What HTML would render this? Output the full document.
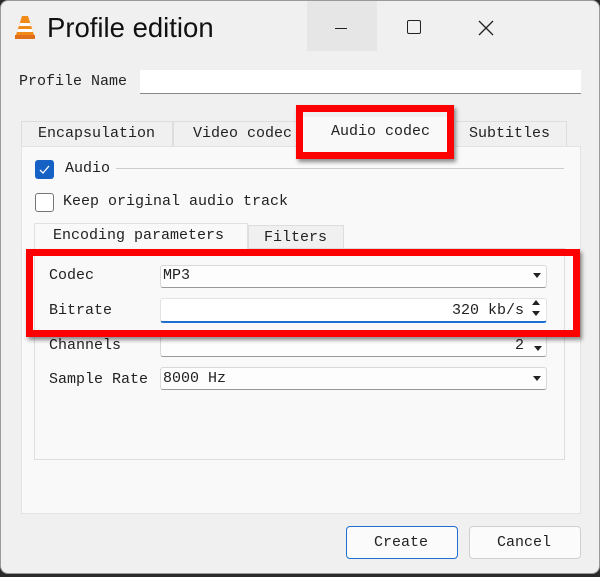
<!DOCTYPE html>
<html><head><meta charset="utf-8"><style>
*{margin:0;padding:0;box-sizing:border-box}
body{width:600px;height:577px;background:#2a2a2a;position:relative;overflow:hidden;font-family:"Liberation Mono","Noto Serif CJK SC",monospace;font-size:15px;color:#222}
.win{position:absolute;left:0;top:0;width:600px;height:574px;background:#f0f0f0;border:1px solid #9a9a9a;border-radius:8px;overflow:hidden}
.a{position:absolute}
.t{position:absolute;white-space:nowrap;line-height:18px}
.tab{position:absolute;background:#f0f0f0;border:1px solid #ddd;border-bottom:none}
.field{position:absolute;background:#fdfdfd;border:1px solid #d8d8d8;border-bottom:1px solid #999;border-radius:3px}
.arrow{position:absolute;width:0;height:0;border-left:4px solid transparent;border-right:4px solid transparent;border-top:5px solid #222}
.red{position:absolute;border:7px solid #f00;box-shadow:2px 3px 4px rgba(0,0,0,.45)}
</style></head><body>
<div class="win">
<div class="a" style="left:306px;top:0;width:70px;height:50px;background:#e6e6e6"></div>
<svg class="a" style="left:13px;top:13px" width="22" height="26" viewBox="0 0 22 26"><path d="M8 2h6l6 19H2z" fill="#f08a18"/><path d="M6 9h10l1 3H5zM4 15h14l1 3H3z" fill="#fff"/><rect x="1" y="21" width="20" height="4" fill="#e0701a"/></svg>
<div class="t" style="left:46px;top:11px;font-family:'Liberation Sans',sans-serif;font-size:27.5px;line-height:31px;color:#111">Profile edition</div>
<div class="a" style="left:334px;top:27px;width:12px;height:1.3px;background:#222"></div>
<div class="a" style="left:406px;top:19px;width:14px;height:14px;border:1.3px solid #222;border-radius:2px"></div>
<svg class="a" style="left:477px;top:19px" width="16" height="16"><path d="M1 1L15 15M15 1L1 15" stroke="#222" stroke-width="1.3"/></svg>
<div class="t" style="left:18px;top:72px">Profile Name</div>
<div class="a" style="left:139px;top:69px;width:441px;height:24px;background:#fff;border-bottom:1px solid #888"></div>
<div class="tab" style="left:20px;top:120px;width:152px;height:26px"></div>
<div class="tab" style="left:172px;top:120px;width:124px;height:26px"></div>
<div class="tab" style="left:453px;top:120px;width:113px;height:26px"></div>
<div class="a" style="left:20px;top:145px;width:560px;height:368px;background:#f9f9f9;border:1px solid #e3e3e3"></div>
<div class="a" style="left:296px;top:116px;width:158px;height:31px;background:#f9f9f9"></div>
<div class="t" style="left:37px;top:124px">Encapsulation</div>
<div class="t" style="left:192px;top:124px">Video codec</div>
<div class="t" style="left:330px;top:122px">Audio codec</div>
<div class="t" style="left:468px;top:124px">Subtitles</div>
<div class="red" style="left:295px;top:104px;width:158px;height:54px"></div>
<div class="a" style="left:34px;top:159px;width:19px;height:19px;background:#1561c4;border-radius:3px"></div>
<svg class="a" style="left:34px;top:159px" width="19" height="19"><path d="M5 10l3 3 6-7" stroke="#fff" stroke-width="1.3" fill="none"/></svg>
<div class="t" style="left:64px;top:159px">Audio</div>
<div class="a" style="left:115px;top:167px;width:448px;height:1px;background:#ccc"></div>
<div class="a" style="left:34px;top:192px;width:19px;height:19px;background:#fff;border:1px solid #777;border-radius:3px"></div>
<div class="t" style="left:62px;top:192px">Keep original audio track</div>
<div class="tab" style="left:247px;top:224px;width:96px;height:24px"></div>
<div class="a" style="left:33px;top:247px;width:531px;height:212px;border:1px solid #dedede;background:#f9f9f9"></div>
<div class="a" style="left:33px;top:222px;width:214px;height:27px;background:#f9f9f9;border:1px solid #e0e0e0;border-bottom:none"></div>
<div class="t" style="left:52px;top:226px">Encoding parameters</div>
<div class="t" style="left:263px;top:228px">Filters</div>
<div class="t" style="left:48px;top:266px">Codec</div>
<div class="field" style="left:159px;top:264px;width:387px;height:23px"></div>
<div class="t" style="left:162px;top:266px">MP3</div>
<div class="arrow" style="left:532px;top:272px"></div>
<div class="t" style="left:48px;top:301px">Bitrate</div>
<div class="a" style="left:159px;top:297px;width:387px;height:25px;background:#fff;border:1px solid #e3e3e3;border-bottom:2px solid #1f6fd0;border-radius:3px"></div>
<div class="t" style="left:451px;top:301px">320 kb/s</div>
<div class="t" style="left:48px;top:336px">Channels</div>
<div class="field" style="left:159px;top:333px;width:387px;height:23px"></div>
<div class="t" style="left:514px;top:336px">2</div>
<div class="arrow" style="left:533px;top:345px"></div>
<div class="t" style="left:48px;top:370px">Sample Rate</div>
<div class="field" style="left:159px;top:366px;width:387px;height:23px"></div>
<div class="t" style="left:162px;top:369px">8000 Hz</div>
<div class="arrow" style="left:532px;top:375px"></div>
<div class="red" style="left:25px;top:248px;width:554px;height:88px"></div>
<div class="a" style="left:531px;top:299px;width:0;height:0;border-left:4px solid transparent;border-right:4px solid transparent;border-bottom:5px solid #222"></div>
<div class="arrow" style="left:531px;top:310px"></div>
<div class="a" style="left:345px;top:525px;width:112px;height:33px;background:#fbfbfb;border:1px solid #1f6fd0;border-radius:4px"></div>
<div class="t" style="left:373px;top:533px">Create</div>
<div class="a" style="left:468px;top:525px;width:112px;height:33px;background:#fbfbfb;border:1px solid #d0d0d0;border-radius:4px"></div>
<div class="t" style="left:496px;top:533px">Cancel</div>
</div>
</body></html>
